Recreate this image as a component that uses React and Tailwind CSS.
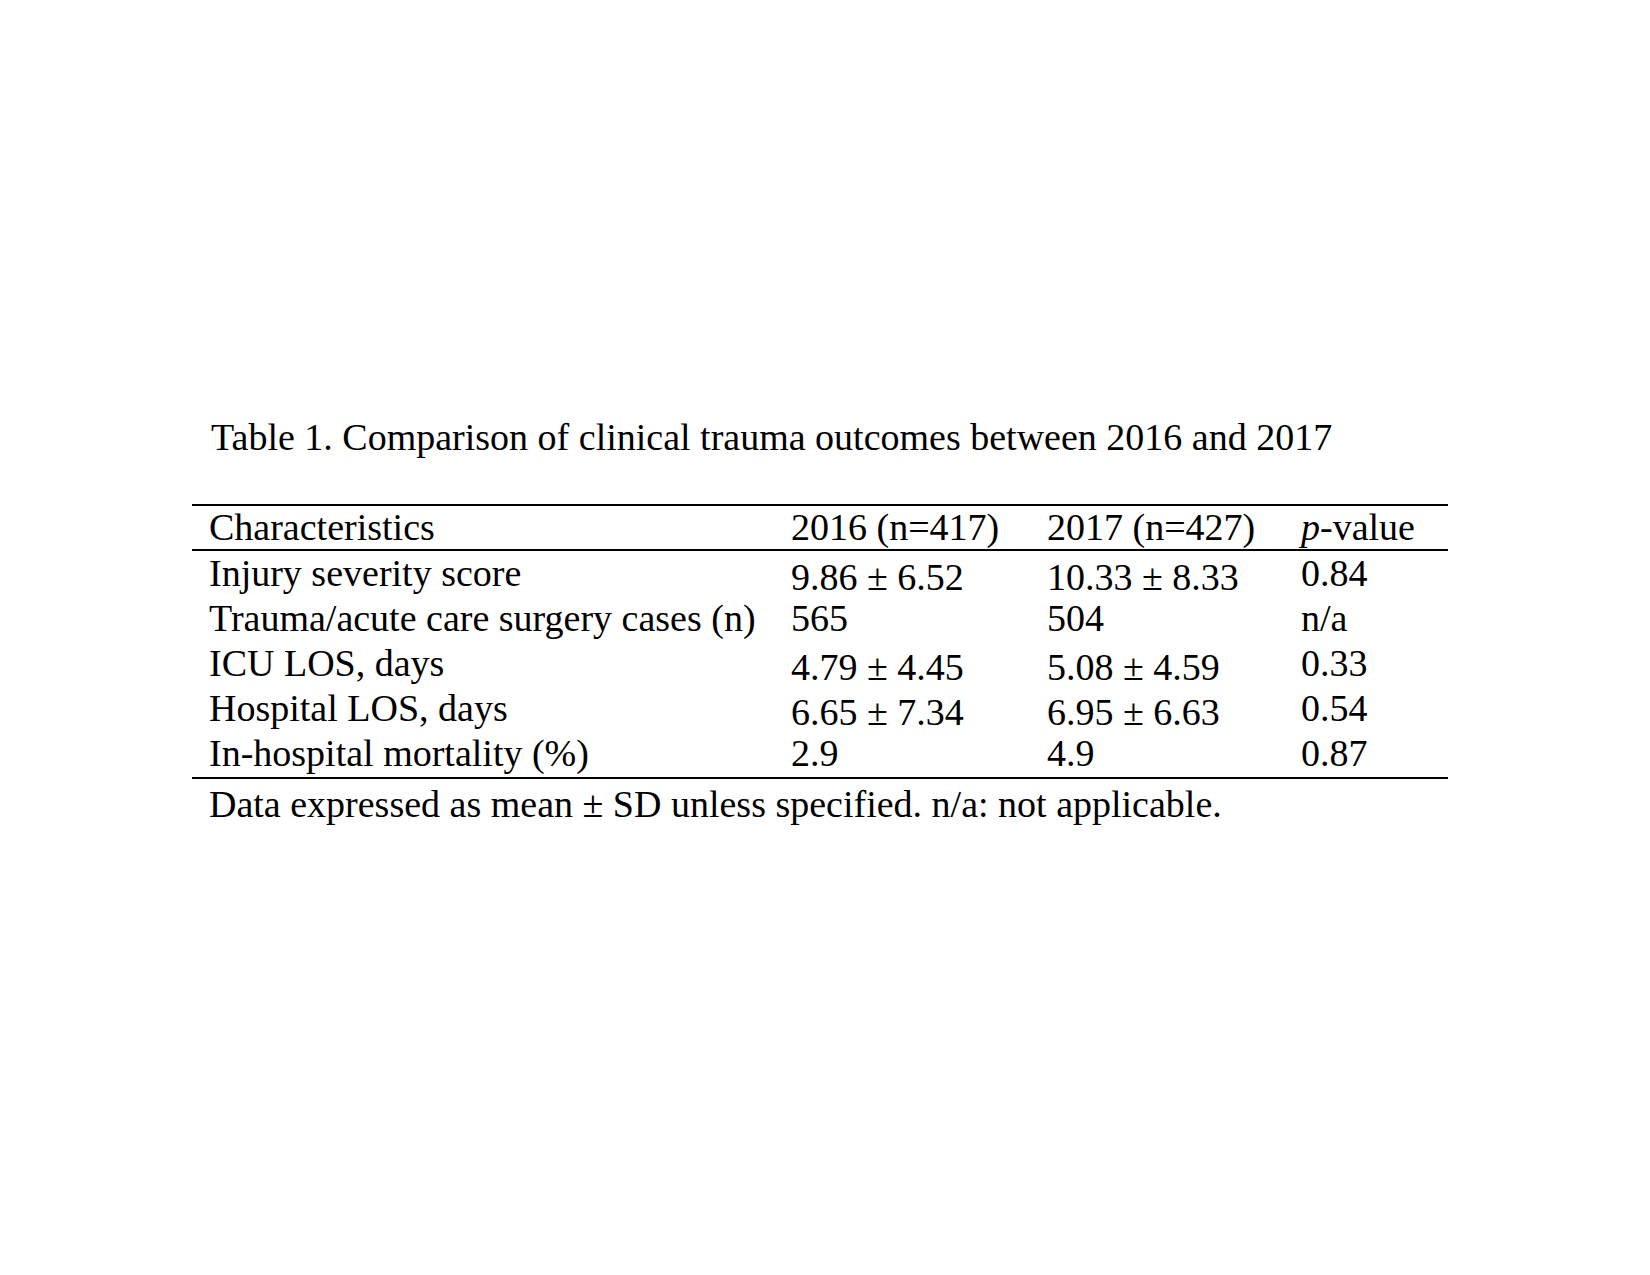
import React from "react";

const rows = [
  { label: "Injury severity score", a: "9.86 ± 6.52", b: "10.33 ± 8.33", p: "0.84", pm: true },
  { label: "Trauma/acute care surgery cases (n)", a: "565", b: "504", p: "n/a", pm: false },
  { label: "ICU LOS, days", a: "4.79 ± 4.45", b: "5.08 ± 4.59", p: "0.33", pm: true },
  { label: "Hospital LOS, days", a: "6.65 ± 7.34", b: "6.95 ± 6.63", p: "0.54", pm: true },
  { label: "In-hospital mortality (%)", a: "2.9", b: "4.9", p: "0.87", pm: false },
];

export default function App() {
  return (
    <div
      className="w-[1650px] h-[1275px] bg-white text-black pt-[417px] pl-[192px] overflow-hidden"
      style={{ fontFamily: '"Liberation Serif", "Times New Roman", serif' }}
    >
      <div className="w-[1256px] text-[38px] leading-[41px]">
        <div className="pl-[19px] whitespace-nowrap">
          Table 1. Comparison of clinical trauma outcomes between 2016 and 2017
        </div>
        <div className="mt-[46px] border-t-2 border-black" />
        <div className="grid grid-cols-[599px_256px_254px_147px] whitespace-nowrap h-[43px] pt-[1px]">
          <div className="pl-[17px]">Characteristics</div>
          <div>2016 (n=417)</div>
          <div>2017 (n=427)</div>
          <div>
            <span className="italic">p</span>-value
          </div>
        </div>
        <div className="border-t-2 border-black" />
        <div className="flex flex-col">
          {rows.map((r) => (
            <div
              key={r.label}
              className="grid grid-cols-[599px_256px_254px_147px] whitespace-nowrap h-[45px] leading-[45px]"
            >
              <div className="pl-[17px]">{r.label}</div>
              <div className={r.pm ? "pt-[4px]" : ""}>{r.a}</div>
              <div className={r.pm ? "pt-[4px]" : ""}>{r.b}</div>
              <div>{r.p}</div>
            </div>
          ))}
        </div>
        <div className="mt-[1px] border-t-2 border-black" />
        <div className="pl-[17px] pt-[3px] leading-[45px] whitespace-nowrap">
          Data expressed as mean ± SD unless specified. n/a: not applicable.
        </div>
      </div>
    </div>
  );
}
